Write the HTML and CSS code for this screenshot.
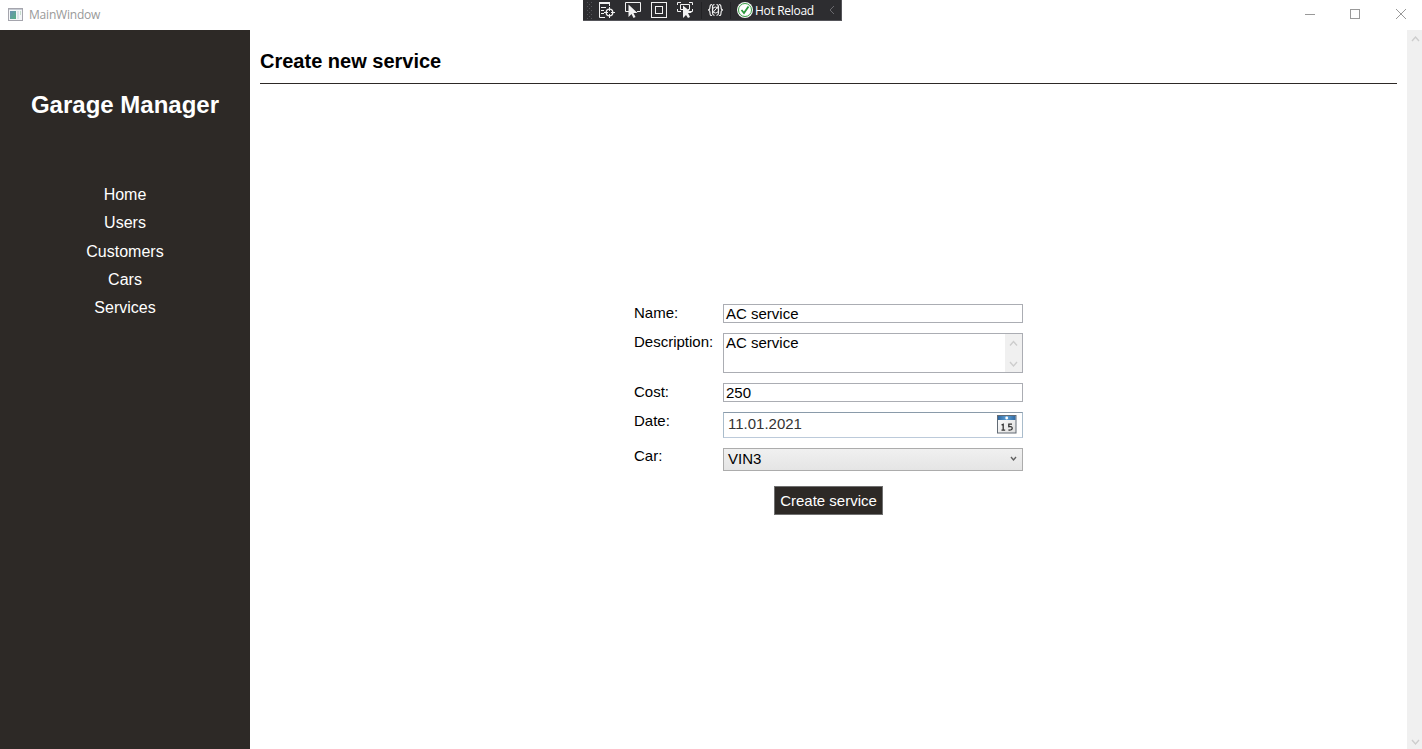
FILE: index.html
```html
<!DOCTYPE html>
<html lang="en">
<head>
<meta charset="utf-8">
<title>MainWindow</title>
<link rel="stylesheet" href="styles.css">
</head>
<body>
<div class="window">
  <header class="titlebar">
    <svg class="app-icon" width="15" height="13" viewBox="0 0 15 13">
      <defs><linearGradient id="app" x2="1" y2="1"><stop stop-color="#6a91b5"/><stop offset="1" stop-color="#55b083"/></linearGradient></defs>
      <rect x=".5" y=".5" width="14" height="12" fill="#f4f6f8" stroke="#a5a5ad"/>
      <path d="M1 1.5h13" stroke="#c5cad2"/>
      <rect x="2" y="3" width="6" height="8" fill="url(#app)"/>
      <rect x="9" y="3" width="2" height="8" fill="#dbe4e8"/><rect x="12" y="3" width="1" height="4" fill="#c5dccb"/>
    </svg>
    <span class="title">MainWindow</span>
    <svg class="controls" width="112" height="30" viewBox="0 0 112 30" fill="none" stroke="#999">
      <path d="M5 14.5h10"/><rect x="50.5" y="9.500" width="9" height="9"/><path d="M96 9l10 10M106 9L96 19"/>
    </svg>
  </header>
  <div class="debugbar">
    <svg class="tools" width="152" height="20" viewBox="0 0 152 20" fill="none" stroke="#f1f1f1">
      <g stroke="#55555a" stroke-dasharray="1 3"><path d="M4.500 2v17M8.500 2v17"/><path d="M6.500 4v15"/></g>
      <path d="M16 3h11" stroke-width="2"/><path d="M16.500 3v14.500H22M26.500 3v3M18 7.500h5M18 10.500h3M18 13.500h3"/>
      <circle cx="26.500" cy="12.500" r="3.300" stroke-width="1.300"/><path d="M26.500 7v4M26.500 14v4M21 12.500h4M28 12.500h4"/>
      <path d="M46 11.500h-3.500v-9h15v9H54"/><path d="M45.500 4.500v12.500l3-3 2 4 2-1-2-4h4z" fill="#f1f1f1" stroke="none"/>
      <rect x="68.500" y="2.500" width="15" height="15"/><rect x="72.500" y="6.500" width="7" height="7"/>
      <path d="M94.500 5V2.500H98M106 2.500h3.500V5M94.500 9v2.500H98M107 11.500h2.500V9M100 9.500h-2.500v-5h9v5H105"/>
      <path d="M100 5.500v12.500l3-3 2 3 2-1-2-4h4z" fill="#f1f1f1" stroke="none"/>
      <path d="M118.500 2v17" stroke="#222225"/>
      <path d="M129 4.500q-2 0-2 2.500 0 3-2 3 2 0 2 3t2 2.500M136 4.500q2 0 2 2.500 0 3 2 3-2 0-2 3t-2 2.500M131.500 4.500q-2 0-2 2.500v6q0 2 2 2.500M133.500 4.500q2 0 2 2.500v6q0 2-2 2.500" stroke-width="1.100"/>
      <circle cx="132.500" cy="10" r="3"/><path d="M129.500 13l6-7"/>
      <path d="M147.500 2v17" stroke="#222225"/>
    </svg>
    <svg class="ok" width="18" height="20" viewBox="0 0 18 20">
      <circle cx="10" cy="10" r="8" fill="#f6f6f6"/><circle cx="10" cy="10" r="6.500" fill="#fff" stroke="#389f45" stroke-width="1"/>
      <path d="M6.500 10l2.500 3 4.500-6.500" fill="none" stroke="#2a9a3a" stroke-width="1.800"/>
    </svg>
    <span class="reload">Hot Reload</span>
    <svg class="collapse" width="8" height="20" viewBox="0 0 8 20" fill="none" stroke="#6a6a6e"><path d="M6 6L2 10l4 4"/></svg>
  </div>
  <div class="body">
    <aside class="sidebar">
      <h1 class="brand">Garage Manager</h1>
      <nav class="nav">
        <a>Home</a><a>Users</a><a>Customers</a><a>Cars</a><a>Services</a>
      </nav>
    </aside>
    <main class="page">
      <h2 class="heading">Create new service</h2>
      <div class="stage">
        <form class="form">
          <label class="label">Name:</label><div class="field">AC service</div>
          <label class="label">Description:</label>
          <div class="field memo"><span>AC service</span>
            <svg class="memo-scroll" width="17" height="38" viewBox="0 0 17 38" fill="none" stroke="#cdcdcd" stroke-width="1.400"><path d="M5 11.500l3.500-4 3.500 4M5 28l3.500 4 3.500-4"/></svg>
          </div>
          <label class="label">Cost:</label><div class="field">250</div>
          <label class="label">Date:</label>
          <div class="field date"><span>11.01.2021</span>
            <svg class="calendar" width="20" height="19" viewBox="0 0 20 19">
              <defs>
                <linearGradient id="cal"><stop stop-color="#3168a0"/><stop offset=".5" stop-color="#5ca1d8"/><stop offset="1" stop-color="#3168a0"/></linearGradient>
                <linearGradient id="sheet" x2="1" y2="1"><stop stop-color="#fff"/><stop offset="1" stop-color="#dedede"/></linearGradient>
              </defs>
              <rect x=".5" y=".5" width="18.500" height="17.500" fill="url(#sheet)" stroke="#626b75"/>
              <rect x="1" y="1" width="17.500" height="4" fill="url(#cal)"/><circle cx="9.700" cy="3" r="1.400" fill="#fff"/>
              <path d="M4.500 10l1.700-.8v5.800M4.500 15.200h3.700M15 9.200h-3.200v2.500q3.400-.6 3.400 1.500 0 2.200-3.700 1.800" fill="none" stroke="#333" stroke-width="1.300"/>
            </svg>
          </div>
          <label class="label car-label">Car:</label>
          <div class="field combo"><span>VIN3</span>
            <svg class="combo-arrow" width="7" height="6" viewBox="0 0 7 6" fill="none" stroke="#606060" stroke-width="1.400"><path d="M1 1l2.500 3L6 1"/></svg>
          </div>
          <button class="submit" type="button">Create service</button>
        </form>
      </div>
    </main>
    <div class="scrollbar">
      <svg width="15" height="18" viewBox="0 0 15 18" fill="none" stroke="#cdcdcd" stroke-width="1.400"><path d="M5 11l3.500-4 3.500 4"/></svg>
      <svg width="15" height="18" viewBox="0 0 15 18" fill="none" stroke="#cdcdcd" stroke-width="1.400"><path d="M5 9l3.500 4L12 9"/></svg>
    </div>
  </div>
</div>
</body>
</html>
```
FILE: styles.css
```css
* { box-sizing: border-box; }
body { margin: 0; background: #fff; color: #000; font-family: "Liberation Sans", Arial, sans-serif; }
svg { display: block; flex: none; }
.window { position: relative; display: flex; flex-direction: column; height: 749px; overflow: hidden; }
.titlebar { display: flex; align-items: center; height: 30px; padding-left: 8px; flex: none; }
.app-icon { margin-top: -2px; }
.title { margin-left: 6px; color: #999; font: 12px/16px "Open Sans", sans-serif; letter-spacing: -.2px; }
.controls { margin-left: auto; margin-right: 10px; }
.debugbar { position: absolute; left: 583px; top: 0; display: flex; width: 259px; height: 21px; background: #2d2d30; border: solid #55555a; border-width: 0 1px 1px 0; }
.reload { margin-left: 2px; color: #fff; font: 12px/22px "Open Sans", sans-serif; letter-spacing: -.3px; white-space: nowrap; }
.collapse { margin-left: auto; margin-right: 5px; }
.body { display: flex; flex: 1; }
.sidebar { width: 250px; background: #2d2926; color: #fff; text-align: center; }
.brand { margin: 61px 0 62px; font-size: 24px; line-height: 28px; }
.nav { display: flex; flex-direction: column; font-size: 16px; line-height: 28.300px; }
.page { display: flex; flex-direction: column; flex: 1; padding: 0 10px; }
.heading { margin: 0; height: 54px; padding-top: 20px; border-bottom: 1px solid #2d2926; font-size: 20px; line-height: 23px; }
.stage { display: flex; flex: 1; align-items: flex-start; justify-content: center; padding-top: 220px; }
.form { display: grid; grid-template-columns: 79px 300px; grid-template-rows: 19px 40px 19px 26px 23px 29px; gap: 10px; font-size: 15px; }
.label { line-height: 17px; white-space: nowrap; }
.car-label { line-height: 15px; }
.field { display: flex; padding-left: 2px; border: 1px solid #abadb3; line-height: 18px; }
.memo { justify-content: space-between; }
.memo-scroll { background: #f0f0f0; }
.date { justify-content: space-between; padding: 1px 5px 0 4px; border-color: #8a9baa #a9bccb #bccada; color: #333; line-height: 19px; }
.calendar { margin-top: 1px; }
.combo { justify-content: space-between; padding: 0 5px 0 4px; border-color: #acacac; background: linear-gradient(#f0f0f0, #e5e5e5); line-height: 20px; }
.combo-arrow { margin-top: 7px; }
.submit { grid-column: 1 / -1; justify-self: center; width: 109px; height: 29px; margin-top: 5px; padding: 0; border: 1px solid #707070; background: #2d2926; color: #fff; font: inherit; white-space: nowrap; }
.scrollbar { display: flex; flex-direction: column; justify-content: space-between; width: 15px; background: #f0f0f0; }
```
